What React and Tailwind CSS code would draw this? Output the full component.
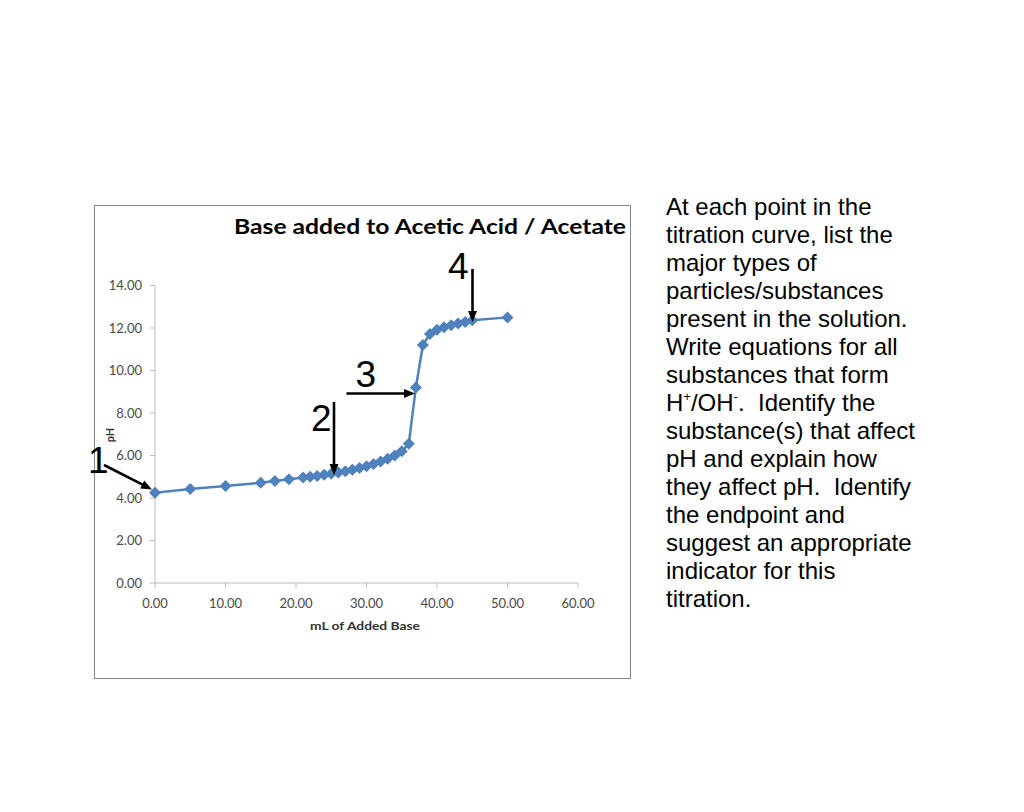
import React from "react";

const X0 = 155;
const XS = 7.05;
const Y0 = 583;
const YS = 21.25;
const xp = (v) => X0 + v * XS;
const yp = (p) => Y0 - p * YS;

const DATA = [
  [0, 4.25], [5, 4.42], [10, 4.56], [15, 4.72], [17, 4.8], [19, 4.88],
  [21, 4.96], [22, 5.0], [23, 5.04], [24, 5.09], [25, 5.14], [26, 5.2],
  [27, 5.26], [28, 5.33], [29, 5.41], [30, 5.5], [31, 5.6], [32, 5.72],
  [33, 5.85], [34, 6.0], [35, 6.2], [36, 6.55], [37, 9.2], [38, 11.2],
  [39, 11.72], [40, 11.92], [41, 12.04], [42, 12.13], [43, 12.21],
  [44, 12.28], [45, 12.36], [50, 12.5],
];

function Arrow({ x1, y1, x2, y2 }) {
  const dx = x2 - x1;
  const dy = y2 - y1;
  const len = Math.hypot(dx, dy);
  const ux = dx / len;
  const uy = dy / len;
  const hl = 11;
  const hw = 4.5;
  const bx = x2 - ux * hl;
  const by = y2 - uy * hl;
  const pts = `${x2},${y2} ${bx - uy * hw},${by + ux * hw} ${bx + uy * hw},${by - ux * hw}`;
  return (
    <g>
      <line x1={x1} y1={y1} x2={bx + ux} y2={by + uy} stroke="#000" strokeWidth="2.6" />
      <polygon points={pts} fill="#000" />
    </g>
  );
}

function Chart() {
  const yTicks = [0, 2, 4, 6, 8, 10, 12, 14];
  const xTicks = [0, 10, 20, 30, 40, 50, 60];
  const line = DATA.map(([v, p]) => `${xp(v)},${yp(p)}`).join(" ");
  return (
    <svg
      width="535"
      height="472"
      viewBox="95 206 535 472"
      className="block overflow-visible font-['Lato','Open_Sans',sans-serif]"
    >
      <text
        x="234"
        y="234"
        fontSize="20.5"
        fontWeight="700"
        fill="#000"
        textLength="392"
        lengthAdjust="spacingAndGlyphs"
      >
        Base added to Acetic Acid / Acetate
      </text>

      <line x1={X0} y1={yp(14)} x2={X0} y2={Y0} stroke="#bcbcbc" strokeWidth="1" />
      <line x1={X0} y1={Y0} x2={xp(60)} y2={Y0} stroke="#bcbcbc" strokeWidth="1" />
      {yTicks.map((t) => (
        <g key={`y${t}`}>
          <line x1={X0 - 5} y1={yp(t)} x2={X0} y2={yp(t)} stroke="#bcbcbc" strokeWidth="1" />
          <text x="142" y={yp(t) + 4.5} fontSize="13" fill="#4a4a4a" textAnchor="end">
            {t.toFixed(2)}
          </text>
        </g>
      ))}
      {xTicks.map((t) => (
        <g key={`x${t}`}>
          <line x1={xp(t)} y1={Y0} x2={xp(t)} y2={Y0 + 5} stroke="#bcbcbc" strokeWidth="1" />
          <text x={xp(t)} y="608" fontSize="13" fill="#4a4a4a" textAnchor="middle">
            {t.toFixed(2)}
          </text>
        </g>
      ))}
      <text
        x="365"
        y="630"
        fontSize="12"
        fontWeight="700"
        fill="#333"
        textAnchor="middle"
        textLength="110"
        lengthAdjust="spacingAndGlyphs"
      >
        mL of Added Base
      </text>
      <text
        x="0"
        y="0"
        fontSize="11"
        fontWeight="700"
        fill="#333"
        textAnchor="middle"
        transform="translate(114 435) rotate(-90)"
      >
        pH
      </text>

      <polyline points={line} fill="none" stroke="#4f81bd" strokeWidth="2.5" strokeLinejoin="round" />
      {DATA.map(([v, p]) => {
        const cx = xp(v);
        const cy = yp(p);
        const r = 6;
        return (
          <polygon
            key={`m${v}`}
            points={`${cx},${cy - r} ${cx + r},${cy} ${cx},${cy + r} ${cx - r},${cy}`}
            fill="#4f81bd"
          />
        );
      })}

      <g className="font-['Liberation_Sans',Arial,sans-serif]" fontSize="37" fill="#000">
        <text x="88" y="473">1</text>
        <text x="311" y="431">2</text>
        <text x="355.5" y="387">3</text>
        <text x="448" y="279">4</text>
      </g>
      <Arrow x1={104} y1={465} x2={152} y2={489.5} />
      <Arrow x1={334} y1={402} x2={334} y2={475} />
      <Arrow x1={346.5} y1={393.5} x2={415} y2={393.5} />
      <Arrow x1={472.5} y1={269} x2={472.5} y2={322} />
    </svg>
  );
}

const LINES = [
  "At each point in the",
  "titration curve, list the",
  "major types of",
  "particles/substances",
  "present in the solution.",
  "Write equations for all",
  "substances that form",
  null,
  "substance(s) that affect",
  "pH and explain how",
  "they affect pH.\u00a0 Identify",
  "the endpoint and",
  "suggest an appropriate",
  "indicator for this",
  "titration.",
];

export default function App() {
  return (
    <div className="w-[1024px] h-[812px] bg-white overflow-hidden">
      <div className="flex items-start pt-[193px] pl-[94px]">
        <div className="mt-[12px] w-[537px] h-[474px] border border-[#868686] bg-white">
          <Chart />
        </div>
        <div className="ml-[35px] text-[24px] leading-[28px] text-black whitespace-nowrap font-['Liberation_Sans',Arial,sans-serif]">
          {LINES.map((l, i) =>
            l === null ? (
              <div key={i}>
                H<sup className="text-[13px] -top-[0.75em]">+</sup>/OH<sup className="text-[13px] -top-[0.75em]">-</sup>.{"\u00a0 "}Identify the
              </div>
            ) : (
              <div key={i}>{l}</div>
            )
          )}
        </div>
      </div>
    </div>
  );
}
